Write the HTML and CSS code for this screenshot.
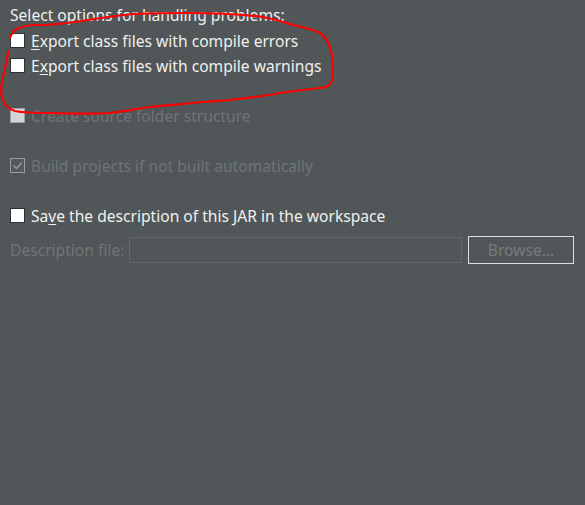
FILE: index.html
```html
<!DOCTYPE html>
<html>
<head>
<meta charset="utf-8">
<link rel="stylesheet" href="styles.css">
</head>
<body>
<div class="page">
  <div class="line header">Select options for handling problems:</div>
  <div class="line row"><span class="box"></span><span class="label"><u>E</u>xport class files with compile errors</span></div>
  <div class="line row"><span class="box"></span><span class="label">E<u>x</u>port class files with compile warnings</span></div>
  <div class="line row gap disabled"><span class="box light"></span><span class="label">Create source folder structure</span></div>
  <div class="line row gap disabled"><span class="box checked"><svg width="13" height="13" viewBox="0 0 13 13"><path d="M2.5 6.5 L5.5 9.5 L11 3.5" fill="none" stroke="#9a9d9f" stroke-width="1.3"/></svg></span><span class="label">Build projects if not built automatically</span></div>
  <div class="line row gap"><span class="box"></span><span class="label">Sa<u>v</u>e the description of this JAR in the workspace</span></div>
  <div class="descrow">
    <span class="dlabel">Description file:</span>
    <span class="field"></span>
    <span class="button">Browse...</span>
  </div>
</div>
<svg class="annot" width="585" height="505" viewBox="0 0 585 505">
  <path d="M10 38 C11 35 12 33 14 31 C17 28 22 26 33 25 C38 24 42 26 45 25 C60 24 75 22 88 20 C100 18 115 16 133 14 C150 13 165 13 185 13 C210 13 240 14 263 17 C275 19 285 22 293 25 C302 27 312 29 320 33 C326 37 330 45 332 55 C333 65 333 75 332 80 C331 85 328 87 320 88 C310 89 300 90 280 93 C265 96 250 98 230 100 C215 101 205 102 200 102 C185 104 170 105 150 107 C135 109 120 112 110 113 C95 114 80 114 50 113 C35 113 25 113 15 111 C8 109 4 104 2 98 C1 92 1 87 2 82 C3 76 5 68 7 60 C7.5 56 8 53 8 51" fill="none" stroke="#ff0000" stroke-width="2.2" stroke-linecap="round" stroke-linejoin="round"/>
</svg>
</body>
</html>
```
FILE: styles.css
```css
html, body {
  margin: 0;
  padding: 0;
  background: #515658;
  width: 585px;
  height: 505px;
  overflow: hidden;
}
.page {
  padding: 3px 11px 0 10px;
  font-family: "Noto Sans", "Open Sans", sans-serif;
  font-size: 15.6px;
  color: #f0f0ee;
  display: flex;
  flex-direction: column;
}
.line {
  height: 25px;
  display: flex;
  align-items: center;
  white-space: nowrap;
}
.header {
  margin-top: -1px;
  margin-bottom: 1px;
}
.row.gap {
  margin-top: 25px;
}
.box {
  width: 13px;
  height: 13px;
  border: 1px solid #2e3133;
  background: #ffffff;
  flex: none;
  margin-right: 6px;
  display: flex;
  align-items: center;
  justify-content: center;
}
.box.light {
  background: #d4d5d6;
  border-color: #9fa2a4;
}
.box.checked {
  background: #545a5c;
  border-color: #9a9d9f;
}
.disabled .label {
  color: #6f7477;
}
u {
  text-decoration-thickness: 1px;
  text-underline-offset: 2px;
}
.descrow {
  margin-top: 8px;
  display: flex;
  align-items: center;
  height: 28px;
}
.dlabel {
  color: #6f7477;
  white-space: nowrap;
  margin-right: 5px;
}
.field {
  flex: 1;
  height: 24px;
  border: 1px solid #62676a;
  margin-right: 6px;
}
.button {
  width: 104px;
  height: 26px;
  border: 1px solid #e0e0e0;
  display: flex;
  align-items: center;
  justify-content: center;
  color: #767b7e;
  flex: none;
}
.annot {
  position: absolute;
  left: 0;
  top: 0;
  pointer-events: none;
}
```
